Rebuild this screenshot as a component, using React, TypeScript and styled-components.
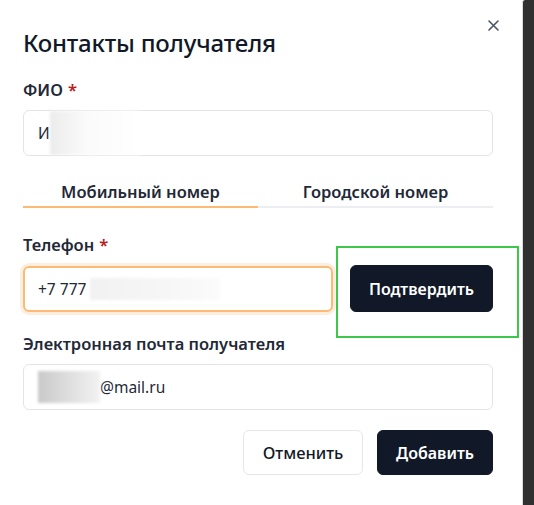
import * as React from 'react';
import styled, { createGlobalStyle } from 'styled-components';

const GlobalStyle = createGlobalStyle`
	html, body {
		margin: 0;
		padding: 0;
		background: #ffffff;
	}
	body {
		font-family: 'Noto Sans', 'Open Sans', sans-serif;
		color: #111827;
	}
	* {
		box-sizing: border-box;
	}
`;

const Page = styled.div`
	display: flex;
	width: 534px;
	height: 505px;
	overflow: hidden;
`;

const Dialog = styled.div`
	position: relative;
	width: 522px;
	padding: 29px 29px 0 23px;
	background: #ffffff;
	display: flex;
	flex-direction: column;
`;

const Backdrop = styled.div`
	flex: 1;
	background: #303030;
	border-left: 1px solid #d9dadd;
	border-top-left-radius: 3px;
`;

const CloseButton = styled.button`
	position: absolute;
	top: 15px;
	right: 19px;
	width: 20px;
	height: 20px;
	padding: 0;
	border: none;
	background: transparent;
	display: flex;
	align-items: center;
	justify-content: center;
	color: #4b5563;
	cursor: pointer;
`;

const Title = styled.h2`
	margin: 0;
	font-size: 24px;
	line-height: 28px;
	font-weight: 500;
	color: #111827;
	letter-spacing: -0.2px;
`;

const Label = styled.div<{ top: number }>`
	margin-top: ${p => p.top}px;
	font-size: 16.5px;
	line-height: 20px;
	font-weight: 600;
	color: #1f2937;
`;

const Required = styled.span`
	color: #b91c1c;
	margin-left: 5px;
`;

const Field = styled.div<{ focused?: boolean; top: number }>`
	margin-top: ${p => p.top}px;
	height: 46px;
	display: flex;
	align-items: center;
	border-radius: 6px;
	background: #ffffff;
	font-size: 15.5px;
	color: #1f2937;
	border: ${p => (p.focused ? '2px solid #fdba74' : '1px solid #e2e4e8')};
	box-shadow: ${p => (p.focused ? '0 0 0 3px #fdeee0' : 'none')};
	padding-left: ${p => (p.focused ? '13px' : '14px')};
`;

const PhoneField = styled(Field)`
	flex: 1;
`;

const Redact = styled.span<{ w: number; h: number; shade: string }>`
	display: inline-block;
	width: ${p => p.w}px;
	height: ${p => p.h}px;
	background: ${p => p.shade};
	filter: blur(1.5px);
`;

const Tabs = styled.div`
	display: flex;
	margin-top: 16px;
`;

const Tab = styled.div<{ active?: boolean }>`
	flex: 1;
	text-align: center;
	padding: 10px 0 4px;
	font-size: 16.5px;
	line-height: 20px;
	font-weight: 600;
	color: #1f2937;
	border-bottom: 2px solid ${p => (p.active ? '#fdba74' : '#eceef1')};
`;

const Row = styled.div`
	display: flex;
	align-items: center;
	gap: 17px;
	margin-top: 10px;
`;

const Button = styled.button<{ dark?: boolean; w: number }>`
	flex: none;
	width: ${p => p.w}px;
	height: ${p => (p.dark ? 47 : 45)}px;
	border-radius: 6px;
	font-family: inherit;
	font-size: ${p => (p.dark ? 16 : 16.5)}px;
	font-weight: ${p => (p.dark ? 600 : 500)};
	color: ${p => (p.dark ? '#ffffff' : '#111827')};
	background: ${p => (p.dark ? '#111827' : '#ffffff')};
	border: 1px solid ${p => (p.dark ? '#111827' : '#e5e7eb')};
	cursor: pointer;
`;

const FooterButton = styled(Button)`
	height: 45px;
`;

const Footer = styled.div`
	display: flex;
	justify-content: flex-end;
	gap: 14px;
	margin-top: 20px;
`;

const Highlight = styled.div`
	position: absolute;
	left: 336px;
	top: 246px;
	width: 183px;
	height: 92px;
	border: 2px solid #3ec74a;
	pointer-events: none;
`;

export default function App() {
	return (
		<Page>
			<GlobalStyle />
			<Dialog>
				<CloseButton aria-label='Закрыть'>
					<svg width='11' height='11' viewBox='0 0 11 11'>
						<path d='M1 1L10 10M10 1L1 10' stroke='currentColor' strokeWidth='1.6' strokeLinecap='round' />
					</svg>
				</CloseButton>
				<Title>Контакты получателя</Title>

				<Label top={23}>
					ФИО<Required>*</Required>
				</Label>
				<Field top={10}>
					И
					<Redact w={90} h={44} shade='linear-gradient(90deg, #ececec 0%, #fafafa 40%, #ffffff 100%)' />
				</Field>

				<Tabs>
					<Tab active>Мобильный номер</Tab>
					<Tab>Городской номер</Tab>
				</Tabs>

				<Label top={27}>
					Телефон<Required>*</Required>
				</Label>
				<Row>
					<PhoneField focused top={0}>
						+7 777&nbsp;
						<Redact w={130} h={22} shade='linear-gradient(90deg, #f1f1f1 0%, #f6f6f6 60%, #fbfbfb 100%)' />
					</PhoneField>
					<Button dark w={143}>
						Подтвердить
					</Button>
				</Row>

				<Label top={22}>Электронная почта получателя</Label>
				<Field top={10}>
					<Redact w={62} h={32} shade='linear-gradient(90deg, #c9c9c9 0%, #dcdcdc 45%, #f2f2f2 100%)' />
					@mail.ru
				</Field>

				<Footer>
					<FooterButton w={120}>Отменить</FooterButton>
					<FooterButton dark w={116}>
						Добавить
					</FooterButton>
				</Footer>

				<Highlight />
			</Dialog>
			<Backdrop />
		</Page>
	);
}
